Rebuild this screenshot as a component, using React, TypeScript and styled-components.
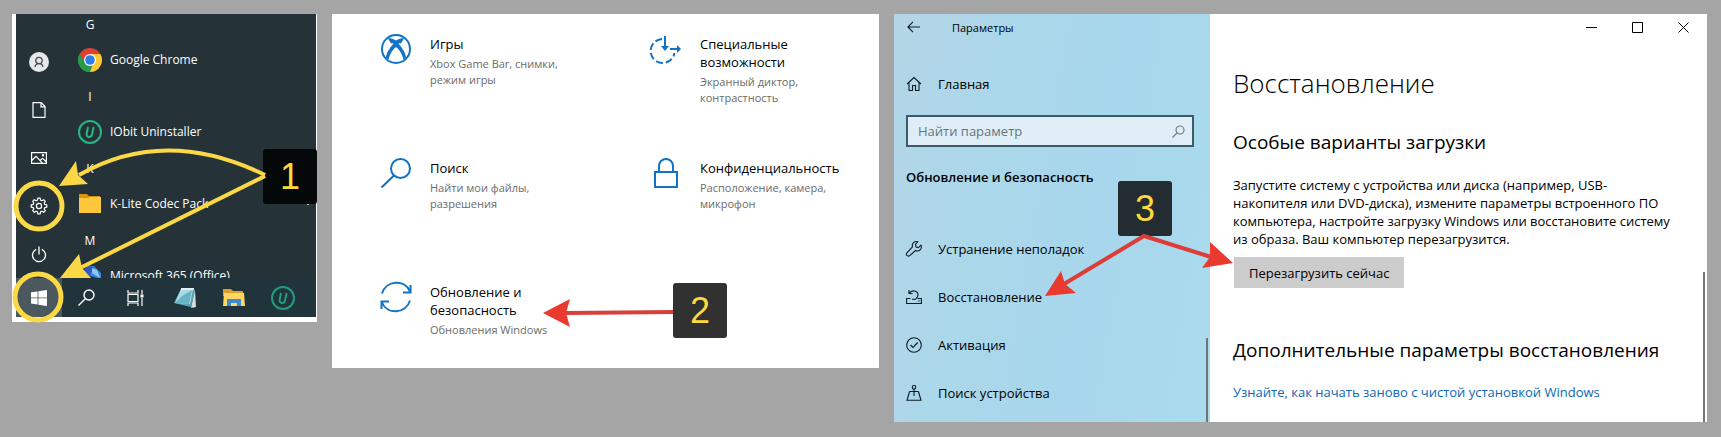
import React from 'react';
import styled, { createGlobalStyle } from 'styled-components';

const GlobalStyle = createGlobalStyle`
  * { box-sizing: border-box; }
  body {
    margin: 0;
    background: #a5a5a5;
    font-family: 'Open Sans', 'Noto Sans', sans-serif;
    font-size: 13px;
    color: #000;
  }
  button { font: inherit; color: inherit; border: 0; padding: 0; background: none; cursor: pointer; }
  h1, h2, h3, p { margin: 0; padding: 0; font-weight: 400; }
  a { color: inherit; text-decoration: none; }
  svg { display: block; flex: none; overflow: visible; }
`;

const Board = styled.main`
  display: grid;
  grid-template-columns: 305fr 547fr 813fr;
  column-gap: 15px;
  align-items: start;
  min-height: 100vh;
  padding: 14px 14px 14px 12px;
`;

/* Annotations */

const Badge = styled.span<{ $left: number; $top: number; $tone: string }>`
  position: absolute;
  left: ${(p) => p.$left}px;
  top: ${(p) => p.$top}px;
  display: flex;
  align-items: center;
  justify-content: center;
  width: 54px;
  height: 55px;
  border-radius: 3px;
  background: ${(p) => p.$tone};
  color: #fcd93d;
  font-family: 'Liberation Sans', Arial, sans-serif;
  font-size: 36px;
  line-height: 55px;
`;

const Annotation = styled.svg`
  position: absolute;
  left: 0;
  top: 0;
  pointer-events: none;
`;

/* Start menu */

const StartPanel = styled.section`
  position: relative;
  padding: 0 1px 5px 4px;
  background: #fff;
  color: #fff;
  font-size: 12px;
`;

const StartBody = styled.div`
  display: flex;
  height: 264px;
  background: #253338;
`;

const Rail = styled.nav`
  display: flex;
  flex-direction: column;
  justify-content: flex-end;
  width: 46px;
`;

const RailButton = styled.button`
  display: flex;
  align-items: center;
  justify-content: center;
  height: 48px;
`;

const AppList = styled.div`
  flex: 1;
  overflow: hidden;
`;

const AppListInner = styled.div`
  margin-top: -6px;
  padding-left: 16px;
`;

const Letter = styled.h3`
  width: 24px;
  font-size: 12px;
  line-height: 34px;
  text-align: center;
`;

const AppRow = styled.button`
  display: flex;
  align-items: center;
  gap: 8px;
  width: 100%;
  height: 35px;
  margin-bottom: 3px;
  text-align: left;
`;

const AppName = styled.span`
  flex: 1;
`;

const RowChevron = styled.svg`
  margin-right: 4px;
`;

const Taskbar = styled.nav`
  display: flex;
  height: 39px;
  background: #22343b;
`;

const TaskButton = styled.button<{ $active?: boolean }>`
  display: flex;
  align-items: center;
  justify-content: center;
  width: ${(p) => (p.$active ? 46 : 49)}px;
  background: ${(p) => (p.$active ? '#4b585d' : 'transparent')};
`;

/* Settings categories */

const CategoryPanel = styled.section`
  position: relative;
  padding: 21px 0 0 48px;
  background: #fff;
`;

const CategoryGrid = styled.div`
  display: grid;
  grid-template-columns: 270px 1fr;
  grid-auto-rows: 84px;
  row-gap: 40px;
  padding-bottom: 1px;
`;

const Category = styled.a`
  display: flex;
  gap: 18px;
`;

const CategoryText = styled.span`
  display: flex;
  flex-direction: column;
`;

const CategoryTitle = styled.span`
  line-height: 18px;
  margin-bottom: 3px;
`;

const CategoryNote = styled.span`
  color: #6b6b6b;
  font-size: 11px;
  line-height: 16px;
`;

/* Recovery window */

const Window = styled.section`
  position: relative;
  display: grid;
  grid-template-columns: 316px 1fr;
  background: #fff;
`;

const Sidebar = styled.aside`
  position: relative;
  padding: 0 16px 5px 12px;
  background: linear-gradient(100deg, #b3d6e6 0%, #abd7ea 30%, #a8d6ec 60%, #aadbee 100%);
`;

const SideHeader = styled.div`
  display: flex;
  align-items: center;
  gap: 32px;
  height: 26px;
  padding-left: 1px;
  font-size: 11px;
`;

const SideLink = styled.a`
  display: flex;
  align-items: center;
  gap: 16px;
  height: 48px;
`;

const HomeLink = styled(SideLink)`
  margin-top: 20px;
`;

const SearchField = styled.label`
  display: flex;
  align-items: center;
  height: 32px;
  margin-top: 7px;
  padding: 0 7px 0 10px;
  border: 2px solid #3d5a69;
  background: #dfeef6;
`;

const SearchInput = styled.input`
  flex: 1;
  min-width: 0;
  padding: 0;
  border: 0;
  outline: 0;
  background: transparent;
  font: inherit;
  &::placeholder { color: #66757d; opacity: 1; }
`;

const SideTitle = styled.h2`
  margin: 20px 0 38px;
  font-size: 13px;
  font-weight: 600;
  line-height: 20px;
`;

const ScrollThumb = styled.span<{ $height: number; $right: number }>`
  position: absolute;
  right: ${(p) => p.$right}px;
  bottom: 0;
  width: 2px;
  height: ${(p) => p.$height}px;
  background: #6f7679;
`;

const Content = styled.div`
  position: relative;
  padding-left: 23px;
`;

const Controls = styled.div`
  display: flex;
  justify-content: flex-end;
  padding-right: 1px;
`;

const ControlButton = styled.button`
  display: flex;
  align-items: center;
  justify-content: center;
  width: 46px;
  height: 26px;
`;

const PageTitle = styled.h1`
  margin-top: 25px;
  font-size: 26px;
  font-weight: 300;
  line-height: 36px;
`;

const SectionTitle = styled.h2<{ $gap: number }>`
  margin-top: ${(p) => p.$gap}px;
  font-size: 19px;
  line-height: 26px;
`;

const Copy = styled.p`
  margin-top: 21px;
  line-height: 18px;
`;

const RestartButton = styled.button`
  height: 31px;
  margin: 9px 0 0 1px;
  padding: 0 15px;
  background: #ccc;
`;

const HelpLink = styled.a`
  display: inline-block;
  margin-top: 20px;
  color: #0f67b5;
  line-height: 18px;
`;

const UninstallerIcon = ({ dark = false }: { dark?: boolean }) => (
  <svg width="24" height="24" viewBox="0 0 24 24" fill="none" stroke={dark ? '#1f9d79' : '#27b682'}>
    <circle cx="12" cy="12" r="11" strokeWidth="2" />
    <path d="M10 7 8.600 14.200C8.200 17.500 12.900 18 14 14.600L15.600 7" strokeWidth="2" />
  </svg>
);

const blue = { fill: 'none', stroke: '#1272c4', strokeWidth: 2 };
const line = { fill: 'none', stroke: '#0c1c24', strokeWidth: 1.1 };

const StartMenu = () => (
  <StartPanel>
    <StartBody>
      <Rail>
        <RailButton aria-label="Учётная запись">
          <svg width="20" height="20" viewBox="0 0 20 20">
            <circle cx="10" cy="10" r="10" fill="#e6e8e9" />
            <g fill="none" stroke="#444b4e" strokeWidth="1.3">
              <circle cx="10" cy="8.5" r="3.2" />
              <path d="M6 15c.3-2.2 1.700-3.300 4-3.300s3.700 1.100 4 3.300" />
            </g>
          </svg>
        </RailButton>
        <RailButton aria-label="Документы">
          <svg width="14" height="16" viewBox="0 0 14 16" fill="none" stroke="#fff" strokeWidth="1.200">
            <path d="M1 .6h8.300L13 4.500v10.900H1zM9 .8v4h4" />
          </svg>
        </RailButton>
        <RailButton aria-label="Изображения">
          <svg width="16" height="12" viewBox="0 0 16 12" fill="none" stroke="#fff" strokeWidth="1.200">
            <path d="M.6.6h14.800v10.800H.6zM.8 8.500 5 4.300l6.500 6.800M9.300 8.300l2.200-2 3.700 3.500" />
            <circle cx="12" cy="3.300" r=".6" />
          </svg>
        </RailButton>
        <RailButton aria-label="Параметры">
          <svg width="18" height="18" viewBox="0 0 18 18" fill="none" stroke="#fff" strokeWidth="1.200" strokeLinejoin="round">
            <circle cx="9" cy="9" r="2.600" />
            <path d="M7.800 1.200h2.400l.4 2 1.300.6 1.800-1.100 1.600 1.600-1.100 1.800.6 1.300 2 .4v2.400l-2 .4-.6 1.300 1.100 1.800-1.600 1.600-1.800-1.100-1.300.6-.4 2H7.800l-.4-2-1.300-.6-1.800 1.100-1.600-1.600 1.100-1.800-.6-1.300-2-.4V7.800l2-.4.600-1.300-1.100-1.800 1.600-1.600 1.800 1.100 1.300-.6z" />
          </svg>
        </RailButton>
        <RailButton aria-label="Выключение">
          <svg width="16" height="17" viewBox="0 0 16 17" fill="none" stroke="#fff" strokeWidth="1.300">
            <path d="M5.200 3.300a6.500 6.500 0 1 0 5.600 0M8 .5v8" />
          </svg>
        </RailButton>
      </Rail>
      <AppList>
        <AppListInner>
          <Letter>G</Letter>
          <AppRow>
            <svg width="24" height="24" viewBox="0 0 24 24">
              <path d="M12 12 1.600 6A12 12 0 0 1 22.400 6z" fill="#dd4133" />
              <path d="M12 12 22.400 6A12 12 0 0 1 12 24z" fill="#fcc934" />
              <path d="M12 12 12 24A12 12 0 0 1 1.600 6z" fill="#259a48" />
              <path d="M12 6h10.400l-6 8.500z" fill="#fcc934" />
              <path d="m17 15-5 9-4-7z" fill="#fcc934" />
              <path d="m6.800 15L1.600 6 12 6z" fill="#dd4133" />
              <path d="M1.600 6 6.800 15 12 18l2.500-.5L12 24A12 12 0 0 1 1.600 6" fill="#259a48" />
              <circle cx="12" cy="12" r="6" fill="#fff" />
              <circle cx="12" cy="12" r="4.800" fill="#2b7de9" />
            </svg>
            <AppName>Google Chrome</AppName>
          </AppRow>
          <Letter>I</Letter>
          <AppRow>
            <UninstallerIcon />
            <AppName>IObit Uninstaller</AppName>
          </AppRow>
          <Letter>K</Letter>
          <AppRow>
            <svg width="24" height="24" viewBox="0 0 24 24">
              <path d="M1 2h8l2 2h11v8H1z" fill="#d9920f" />
              <path d="M1 6h9l2-1h11v16H1z" fill="#fdc73c" />
            </svg>
            <AppName>K-Lite Codec Pack</AppName>
            <RowChevron width="8" height="5" viewBox="0 0 8 5" fill="none" stroke="#c9ced0">
              <path d="m2 2 2 2 2-2" />
            </RowChevron>
          </AppRow>
          <Letter>M</Letter>
          <AppRow>
            <svg width="24" height="24" viewBox="0 0 24 24">
              <path d="M3 9 10 2l6 1-7 9v10l-6-4z" fill="#5367dc" />
              <path d="M10 2h6l7 7v8l-4-3-9-3z" fill="#3289e0" />
              <path d="m10 2 6 1-4 8-9 3V9z" fill="#3558c5" />
              <path d="m14 4 5 2 3 8-8-5z" fill="#8cc6f4" />
            </svg>
            <AppName>Microsoft 365 (Office)</AppName>
          </AppRow>
        </AppListInner>
      </AppList>
    </StartBody>
    <Taskbar>
      <TaskButton $active aria-label="Пуск">
        <svg width="16" height="16" viewBox="0 0 16 16" fill="#fff">
          <path d="M0 2.300 6.600 1.400v6.100H0zM7.400 1.300 16 0v7.500H7.400zM0 8.300h6.600v6.200L0 13.600zM7.400 8.300H16V16l-8.600-1.300z" />
        </svg>
      </TaskButton>
      <TaskButton aria-label="Поиск">
        <svg width="17" height="17" viewBox="0 0 17 17" fill="none" stroke="#fff" strokeWidth="1.400">
          <circle cx="11" cy="6" r="5" />
          <path d="M7.300 9.700.5 16.500" />
        </svg>
      </TaskButton>
      <TaskButton aria-label="Представление задач">
        <svg width="17" height="16" viewBox="0 0 17 16" fill="none" stroke="#fff" strokeWidth="1.200">
          <path d="M1 0v3h10V0M1 16v-3h10v3M1 4.500h10v7H1zM15 0v4M15 8v8" />
          <path d="M13.500 4.500h3v3h-3z" fill="#fff" stroke="none" />
        </svg>
      </TaskButton>
      <TaskButton aria-label="Блокнот">
        <svg width="23" height="22" viewBox="0 0 23 22">
          <path d="M8 2 22 3l-4 17L1 16z" fill="#5aa6b7" />
          <path d="M8 2 20 2l-3 15-15-1z" fill="#a9dbe6" />
          <path d="m9 9 10-6-3 14-14-1z" fill="#67b4c7" />
          <path d="m22 3 1 17-5 1z" fill="#d5dcdc" />
          <path d="M8 2h13" stroke="#e7eeee" strokeWidth="2" />
        </svg>
      </TaskButton>
      <TaskButton aria-label="Проводник">
        <svg width="22" height="20" viewBox="0 0 22 20">
          <path d="M0 1h8l2 2h10v5H0z" fill="#dca126" />
          <path d="M1 5h20l1 13H0z" fill="#ffd564" />
          <path d="M4 18v-7h14v7h-4v-3H8v3z" fill="#3c8bd0" />
        </svg>
      </TaskButton>
      <TaskButton aria-label="IObit Uninstaller">
        <UninstallerIcon dark />
      </TaskButton>
    </Taskbar>
    <Badge $left={251} $top={135} $tone="#050808">1</Badge>
    <Annotation width="305" height="308" viewBox="12 14 305 308" fill="none" stroke="#fbd946">
      <circle cx="39" cy="206" r="23" strokeWidth="5" />
      <circle cx="38" cy="297" r="23" strokeWidth="5" />
      <path d="M265 175Q165 126 79 175" strokeWidth="4" />
      <path d="M265 176 80 268" strokeWidth="4" />
      <path d="m59 186 17-25 2 14 10 9z" fill="#fbd946" stroke="none" />
      <path d="m60 278 19-24 3 14 9 10z" fill="#fbd946" stroke="none" />
    </Annotation>
  </StartPanel>
);

const Categories = () => (
  <CategoryPanel>
    <CategoryGrid>
      <Category href="#games">
        <svg width="32" height="30" viewBox="0 0 32 30" {...blue}>
          <circle cx="16" cy="14" r="14" />
          <path d="M8 3.500c3-.8 5.500.5 8 2 2.500-1.500 5-2.800 8-2l-3 5c-1-.6-2.600 0-2.600 0 4 4.500 7.600 10 7.600 14.500l-2.500 1.500C22 18.500 19 14.300 16 12c-3 2.300-6 6.500-7.500 12.500L6 23c0-4.500 3.600-10 7.600-14.500 0 0-1.600-.6-2.600 0z" fill="#1272c4" stroke="none" />
        </svg>
        <CategoryText>
          <CategoryTitle>Игры</CategoryTitle>
          <CategoryNote>Xbox Game Bar, снимки,<br />режим игры</CategoryNote>
        </CategoryText>
      </Category>
      <Category href="#accessibility">
        <svg width="32" height="30" viewBox="0 0 32 30" {...blue}>
          <path d="M12 4a12 12 0 1 0 12.500 14" strokeDasharray="7 3" />
          <path d="M15 1v13M20 14h10" />
          <path d="m11 11 4 5 4-5zM27 10l4 4-4 4z" fill="#1272c4" stroke="none" />
        </svg>
        <CategoryText>
          <CategoryTitle>Специальные<br />возможности</CategoryTitle>
          <CategoryNote>Экранный диктор,<br />контрастность</CategoryNote>
        </CategoryText>
      </Category>
      <Category href="#search">
        <svg width="32" height="30" viewBox="0 0 32 30" {...blue}>
          <circle cx="20.500" cy="9.500" r="9.500" />
          <path d="M14 16.500 1.500 28.500" />
        </svg>
        <CategoryText>
          <CategoryTitle>Поиск</CategoryTitle>
          <CategoryNote>Найти мои файлы,<br />разрешения</CategoryNote>
        </CategoryText>
      </Category>
      <Category href="#privacy">
        <svg width="32" height="30" viewBox="0 0 32 30" {...blue}>
          <path d="M5 13h22v15H5zM9 13V7a7 7 0 0 1 14 0v6" />
        </svg>
        <CategoryText>
          <CategoryTitle>Конфиденциальность</CategoryTitle>
          <CategoryNote>Расположение, камера,<br />микрофон</CategoryNote>
        </CategoryText>
      </Category>
      <Category href="#update">
        <svg width="32" height="30" viewBox="0 1 32 30" {...blue}>
          <path d="M2 11.500C6-2 25-3 30 9.500M30.500 3v7.500H23M30 18.500C26 32 7 33 2 20.500M1.500 27v-7.500H9" />
        </svg>
        <CategoryText>
          <CategoryTitle>Обновление и<br />безопасность</CategoryTitle>
          <CategoryNote>Обновления Windows</CategoryNote>
        </CategoryText>
      </Category>
    </CategoryGrid>
    <Annotation width="547" height="354" viewBox="332 14 547 354">
      <path d="m566 313 108-1" fill="none" stroke="#d8403a" strokeWidth="4" />
      <path d="m543 313 27-14-4 14 4 14z" fill="#ea3a30" />
    </Annotation>
    <Badge $left={341} $top={269} $tone="#313131">2</Badge>
  </CategoryPanel>
);

const Recovery = () => (
  <Window>
    <Sidebar>
      <SideHeader>
        <button aria-label="Назад">
          <svg width="13" height="12" viewBox="0 0 13 12" {...line}>
            <path d="M6 .8.900 6 6 11.200M1 6h12" />
          </svg>
        </button>
        <span>Параметры</span>
      </SideHeader>
      <HomeLink href="#home">
        <svg width="16" height="16" viewBox="0 0 16 16" {...line}>
          <path d="m1 8 7-6.500L15 8M3 6.500v8h3.500v-5h3v5H13v-8" />
        </svg>
        Главная
      </HomeLink>
      <SearchField>
        <SearchInput type="text" placeholder="Найти параметр" aria-label="Найти параметр" />
        <svg width="13" height="13" viewBox="0 0 13 13" fill="none" stroke="#6e7f88" strokeWidth="1.200">
          <circle cx="8" cy="5" r="4" />
          <path d="M5 8 .500 12.500" />
        </svg>
      </SearchField>
      <SideTitle>Обновление и безопасность</SideTitle>
      <nav>
        <SideLink href="#troubleshoot">
          <svg width="16" height="16" viewBox="0 0 16 16" {...line}>
            <path d="M11.800.8a4 4 0 0 0-5.300 5L.9 11.800a1.900 1.900 0 0 0 .1 2.700 1.900 1.900 0 0 0 2.700.1L9.600 9.500a4 4 0 0 0 5.400-5.300L12.300 6.600 10 6.100 9.500 3.500z" />
          </svg>
          Устранение неполадок
        </SideLink>
        <SideLink href="#recovery">
          <svg width="16" height="16" viewBox="0 0 16 16" {...line}>
            <path d="M4.500 9.500H.6v5h14.800v-5h-3.900M3 1v3.500h3.500M3.300 4.300C5.500.5 12 1.500 12 6c0 2-1 3-2.300 4.200H6" />
            <path d="M12 12h1.500" />
          </svg>
          Восстановление
        </SideLink>
        <SideLink href="#activation">
          <svg width="16" height="16" viewBox="0 0 16 16" {...line}>
            <circle cx="8" cy="8" r="7.300" />
            <path d="m4.500 8 2.500 2.500 4.700-5" />
          </svg>
          Активация
        </SideLink>
        <SideLink href="#find-device">
          <svg width="16" height="16" viewBox="0 0 16 16" {...line}>
            <circle cx="8" cy="2.300" r="1.800" />
            <path d="M8 4.100v7M3.600 6.500h8.800M3.600 6.500 1 15.300h14l-2.600-8.800" />
          </svg>
          Поиск устройства
        </SideLink>
      </nav>
      <ScrollThumb $height={84} $right={2} />
    </Sidebar>
    <Content>
      <Controls>
        <ControlButton aria-label="Свернуть">
          <svg width="11" height="11" viewBox="0 0 11 11" stroke="#000"><path d="M0 5.500h11" /></svg>
        </ControlButton>
        <ControlButton aria-label="Развернуть">
          <svg width="11" height="11" viewBox="0 0 11 11" fill="none" stroke="#000"><path d="M.5.500h10v10H.5z" /></svg>
        </ControlButton>
        <ControlButton aria-label="Закрыть">
          <svg width="11" height="11" viewBox="0 0 11 11" stroke="#000"><path d="m.5.500 10 10M10.500.500l-10 10" /></svg>
        </ControlButton>
      </Controls>
      <PageTitle>Восстановление</PageTitle>
      <SectionTitle $gap={28}>Особые варианты загрузки</SectionTitle>
      <Copy>
        Запустите систему с устройства или диска (например, USB-<br />
        накопителя или DVD-диска), измените параметры встроенного ПО<br />
        компьютера, настройте загрузку Windows или восстановите систему<br />
        из образа. Ваш компьютер перезагрузится.
      </Copy>
      <RestartButton>Перезагрузить сейчас</RestartButton>
      <SectionTitle $gap={49}>Дополнительные параметры восстановления</SectionTitle>
      <HelpLink href="#clean-install">Узнайте, как начать заново с чистой установкой Windows</HelpLink>
      <ScrollThumb $height={150} $right={2} />
    </Content>
    <Badge $left={224} $top={167} $tone="#232c31">3</Badge>
    <Annotation width="813" height="408" viewBox="894 14 813 408">
      <path d="M1064 284 1144 236 1211 257" fill="none" stroke="#dc3d38" strokeWidth="4" />
      <path d="m1045 296 16-25 4 13 11 9z" fill="#ea3a30" />
      <path d="m1233 263-23-21v15l-8 11z" fill="#ea3a30" />
    </Annotation>
  </Window>
);

export default function App() {
  return (
    <>
      <GlobalStyle />
      <Board>
        <StartMenu />
        <Categories />
        <Recovery />
      </Board>
    </>
  );
}
